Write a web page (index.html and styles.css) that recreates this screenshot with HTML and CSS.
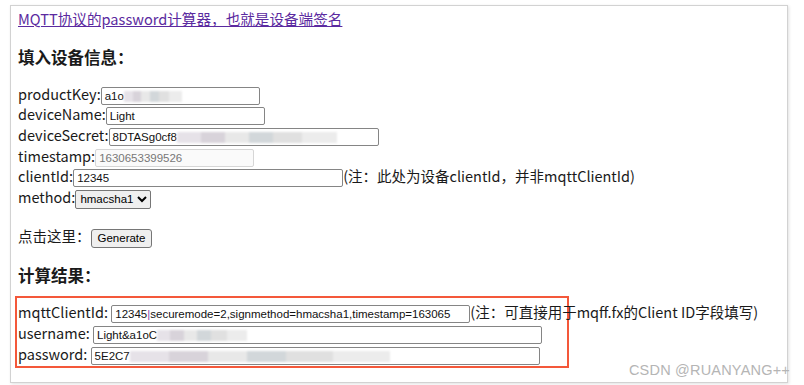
FILE: index.html
```html
<!DOCTYPE html>
<html lang="zh-CN">
<head>
  <meta charset="UTF-8">
  <title>MQTT password 计算器</title>
  <link rel="stylesheet" href="styles.css">
</head>
<body>
  <div class="frame">
    <a class="title-link" href="#">MQTT协议的password计算器，也就是设备端签名</a>

    <h3>填入设备信息：</h3>

    <div class="rows">
      <div class="row">productKey:<span class="field w-sm">a1o<span class="smudge s-key"></span></span></div>
      <div class="row">deviceName:<span class="field w-sm">Light</span></div>
      <div class="row">deviceSecret:<span class="field w-md">8DTASg0cf8<span class="smudge s-secret"></span></span></div>
      <div class="row">timestamp:<span class="field w-sm readonly">1630653399526</span></div>
      <div class="row">clientId:<span class="field w-md">12345</span>(注：此处为设备clientId，并非mqttClientId)</div>
      <div class="row">method:<select class="method"><option>hmacsha1</option></select></div>
    </div>

    <div class="row action">点击这里：<button class="btn">Generate</button></div>

    <h3 class="result-title">计算结果：</h3>

    <div class="result-box">
      <div class="row">mqttClientId: <span class="field w-lg">12345<span class="caret">|</span>securemode=2,signmethod=hmacsha1,timestamp=163065</span>(注：可直接用于mqff.fx的Client ID字段填写)</div>
      <div class="row">username: <span class="field w-xl">Light&amp;a1oC<span class="smudge s-user"></span></span></div>
      <div class="row">password: <span class="field w-xl">5E2C7<span class="smudge s-pass"></span></span></div>
    </div>
  </div>

  <div class="watermark">CSDN @RUANYANG++</div>
</body>
</html>
```

FILE: styles.css
```css
html, body {
  margin: 0;
  background: #fff;
}
body {
  position: relative;
  width: 804px;
  height: 385px;
  overflow: hidden;
  font-family: "Noto Sans CJK SC", "Noto Sans", sans-serif;
  font-size: 14.5px;
  color: #1a1a1a;
}
.frame {
  box-sizing: border-box;
  width: 778px;
  height: 378px;
  margin: 5px 0 0 10px;
  padding: 0 0 0 7px;
  border: 1px solid #d2d2d2;
  box-shadow: 1px 1px 3px rgba(0,0,0,0.12);
}
.title-link {
  display: block;
  margin-top: 3px;
  line-height: 20px;
  font-size: 14.6px;
  color: #5b2aa0;
  text-decoration: underline;
}
h3 {
  margin: 17px 0 0;
  font-size: 16.5px;
  line-height: 22px;
  font-weight: bold;
}
.rows { margin-top: 15.6px; }
.row {
  line-height: 20.7px;
  height: 20.7px;
  white-space: nowrap;
}
.action {
  margin-top: 17.6px;
  line-height: 21px;
  height: 21px;
}
.result-title { margin-top: 17.5px; }

.field {
  display: inline-block;
  box-sizing: border-box;
  height: 18px;
  padding: 0 3px;
  border: 1px solid #858585;
  border-radius: 2px;
  font-family: "Liberation Sans", Arial, sans-serif;
  font-size: 11.5px;
  line-height: 16px;
  color: #111;
  vertical-align: middle;
  overflow: hidden;
  white-space: nowrap;
  background: #fff;
}
.w-sm { width: 159px; }
.w-md { width: 270px; }
.w-lg { width: 359px; }
.w-xl { width: 449px; }
.readonly {
  border-color: #d6d6d6;
  background: #fafafa;
  color: #777;
}
.caret { color: #8a3fa8; }

.smudge {
  display: inline-block;
  height: 11px;
  vertical-align: -2px;
  filter: blur(1.2px);
  background: linear-gradient(90deg, #e6e2e8 0 15%, #d8d3da 15% 30%, #e8e8e8 30% 45%, #d2d7da 45% 60%, #e0e0e0 60% 78%, #ececec 78% 100%);
}
.s-key { width: 58px; }
.s-secret { width: 160px; }
.s-user { width: 90px; }
.s-pass { width: 260px; }

.method {
  height: 19px;
  margin: 0;
  padding: 0;
  font-family: "Liberation Sans", Arial, sans-serif;
  font-size: 11.5px;
  vertical-align: middle;
  border: 1px solid #767676;
  border-radius: 2px;
}
.btn {
  height: 19px;
  margin-left: 0;
  padding: 0 6px;
  font-family: "Liberation Sans", Arial, sans-serif;
  font-size: 11.5px;
  background: #efefef;
  border: 1px solid #767676;
  border-radius: 3px;
  vertical-align: middle;
}

.result-box {
  width: 554px;
  box-sizing: border-box;
  margin: 10px 0 0 -3px;
  padding: 4.5px 0 1.5px 1px;
  border: 2px solid #f4583a;
}

.watermark {
  position: absolute;
  right: 14px;
  bottom: 7px;
  font-family: "Liberation Sans", Arial, sans-serif;
  font-size: 14.5px;
  letter-spacing: 0.2px;
  color: #b5b5b5;
}
```
